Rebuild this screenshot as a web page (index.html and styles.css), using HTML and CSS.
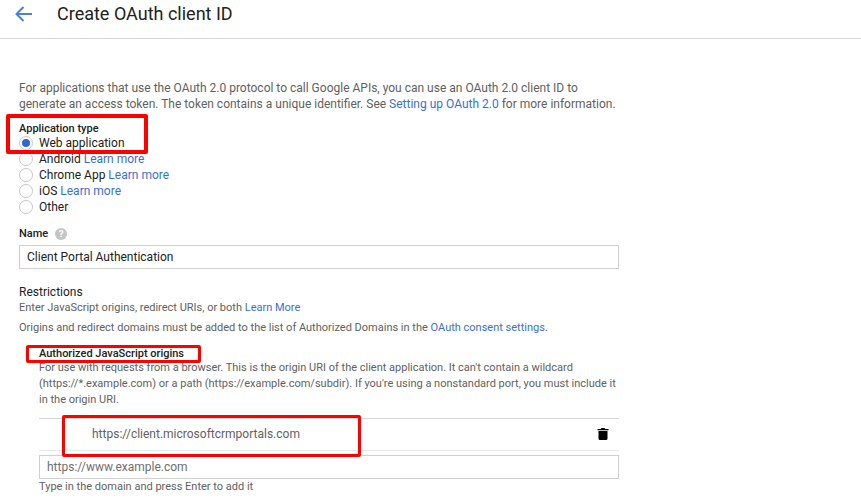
FILE: index.html
```html
<!DOCTYPE html>
<html lang="en">
<head>
<meta charset="utf-8">
<title>Create OAuth client ID</title>
<link rel="stylesheet" href="styles.css">
</head>
<body>
<header class="topbar">
  <svg class="back" width="18" height="16" viewBox="0 0 18 16"><path d="M17 8H2M8.500 1 1.500 8l7 7" fill="none" stroke="#4a7fe0" stroke-width="2"/></svg>
  <h1 class="title">Create OAuth client ID</h1>
</header>
<main class="form">
  <p class="intro">For applications that use the OAuth 2.0 protocol to call Google APIs, you can use an OAuth 2.0 client ID to generate an access token. The token contains a unique identifier. See <a class="link" href="#">Setting up OAuth 2.0</a> for more information.</p>
  <div class="label type-label">Application type</div>
  <ul class="radios">
    <li class="radio-row"><span class="radio on"></span>Web application</li>
    <li class="radio-row"><span class="radio"></span>Android&nbsp;<a class="link" href="#">Learn more</a></li>
    <li class="radio-row"><span class="radio"></span>Chrome App&nbsp;<a class="link" href="#">Learn more</a></li>
    <li class="radio-row"><span class="radio"></span>iOS&nbsp;<a class="link" href="#">Learn more</a></li>
    <li class="radio-row"><span class="radio"></span>Other</li>
  </ul>
  <div class="label name-label">Name <span class="help">?</span></div>
  <div class="input name-input">Client Portal Authentication</div>
  <h2 class="restrict">Restrictions</h2>
  <p class="note">Enter JavaScript origins, redirect URIs, or both <a class="link" href="#">Learn More</a></p>
  <p class="note second">Origins and redirect domains must be added to the list of Authorized Domains in the <a class="link" href="#">OAuth consent settings</a>.</p>
  <section class="origins">
    <div class="label origins-label">Authorized JavaScript origins</div>
    <p class="desc">For use with requests from a browser. This is the origin URI of the client application. It can't contain a wildcard (https://*.example.com) or a path (https://example.com/subdir). If you're using a nonstandard port, you must include it in the origin URI.</p>
    <div class="uri-row">
      <span class="uri">https://client.microsoftcrmportals.com</span>
      <svg class="trash" width="12" height="13" viewBox="0 0 12 13"><path d="M0.500 2h3.300l.7-1h3l.7 1h3.300v1.300H.5zM1.500 4h9v7.500q0 1.500-1.500 1.500H3q-1.500 0-1.500-1.500z" fill="#000"/></svg>
    </div>
    <div class="input uri-input">https://www.example.com</div>
    <div class="hint">Type in the domain and press Enter to add it</div>
  </section>
</main>
<div class="mark mark-type"></div>
<div class="mark mark-origins"></div>
<div class="mark mark-uri"></div>
</body>
</html>
```
FILE: styles.css
```css
* { box-sizing: border-box; }
html, body { margin: 0; padding: 0; }
body {
  width: 861px;
  height: 504px;
  overflow: hidden;
  position: relative;
  background: #fff;
  font-family: Roboto, "Liberation Sans", sans-serif;
  font-size: 12px;
  color: #212121;
}
.topbar {
  height: 39px;
  border-bottom: 1px solid #d6d6d6;
  display: flex;
  align-items: flex-start;
  padding: 5px 0 0 15px;
}
.back { margin-top: 1px; }
.title {
  margin: -3px 0 0 24px;
  font-size: 18px;
  line-height: 24px;
  font-weight: 400;
  color: #212121;
}
.form { width: 600px; margin-left: 19px; padding-top: 41px; }
.intro { margin: 0; line-height: 16px; color: #616161; }
.link { color: #3b6fd1; text-decoration: none; }
.label { font-weight: 500; font-size: 11px; color: #212121; }
.type-label { margin-top: 10px; line-height: 13px; }
.radios { list-style: none; margin: 0; padding: 0; }
.radio-row { height: 16px; line-height: 16px; display: flex; align-items: center; color: #212121; }
.radio {
  width: 14px;
  height: 14px;
  margin-right: 6px;
  border: 1px solid #c8c8c8;
  border-radius: 50%;
  display: flex;
  align-items: center;
  justify-content: center;
  flex: none;
}
.radio.on::after {
  content: "";
  width: 8px;
  height: 8px;
  border-radius: 50%;
  background: #3367d6;
}
.name-label { margin-top: 12px; line-height: 13px; display: flex; align-items: center; gap: 7px; }
.help {
  width: 12px;
  height: 12px;
  border-radius: 50%;
  background: #c4c4c4;
  color: #fff;
  font-size: 9px;
  font-weight: 700;
  line-height: 12px;
  text-align: center;
}
.input {
  height: 24px;
  line-height: 22px;
  border: 1px solid #d0d0d0;
  padding-left: 7px;
}
.name-input { margin-top: 5px; color: #212121; }
.restrict { margin: 15px 0 0; font-size: 12px; line-height: 16px; font-weight: 400; color: #212121; }
.note { margin: 0; line-height: 16px; font-size: 11px; color: #616161; }
.second { margin-top: 4px; }
.origins { margin-left: 20px; }
.origins-label { margin-top: 11px; line-height: 13px; }
.desc { margin: 0; font-size: 11px; line-height: 16px; color: #616161; }
.uri-row {
  margin-top: 10px;
  height: 33px;
  border-top: 1px solid #d6d6d6;
  border-bottom: 1px solid #e8e8e8;
  display: flex;
  align-items: center;
  justify-content: space-between;
  padding: 0 10px 2px 53px;
}
.uri { color: #616161; }
.trash { display: block; }
.uri-input { margin-top: 4px; color: #6f6f6f; }
.hint { font-size: 11px; line-height: 14px; color: #616161; margin-top: 1px; }
.mark {
  position: absolute;
  border-style: solid;
  border-color: #ff0000;
  border-radius: 2px;
}
.mark-type { left: 6px; top: 114px; width: 142px; height: 40px; border-width: 4px; }
.mark-origins { left: 26px; top: 345px; width: 175px; height: 18px; border-width: 3px; }
.mark-uri { left: 62px; top: 415px; width: 299px; height: 42px; border-width: 3px; }
```
